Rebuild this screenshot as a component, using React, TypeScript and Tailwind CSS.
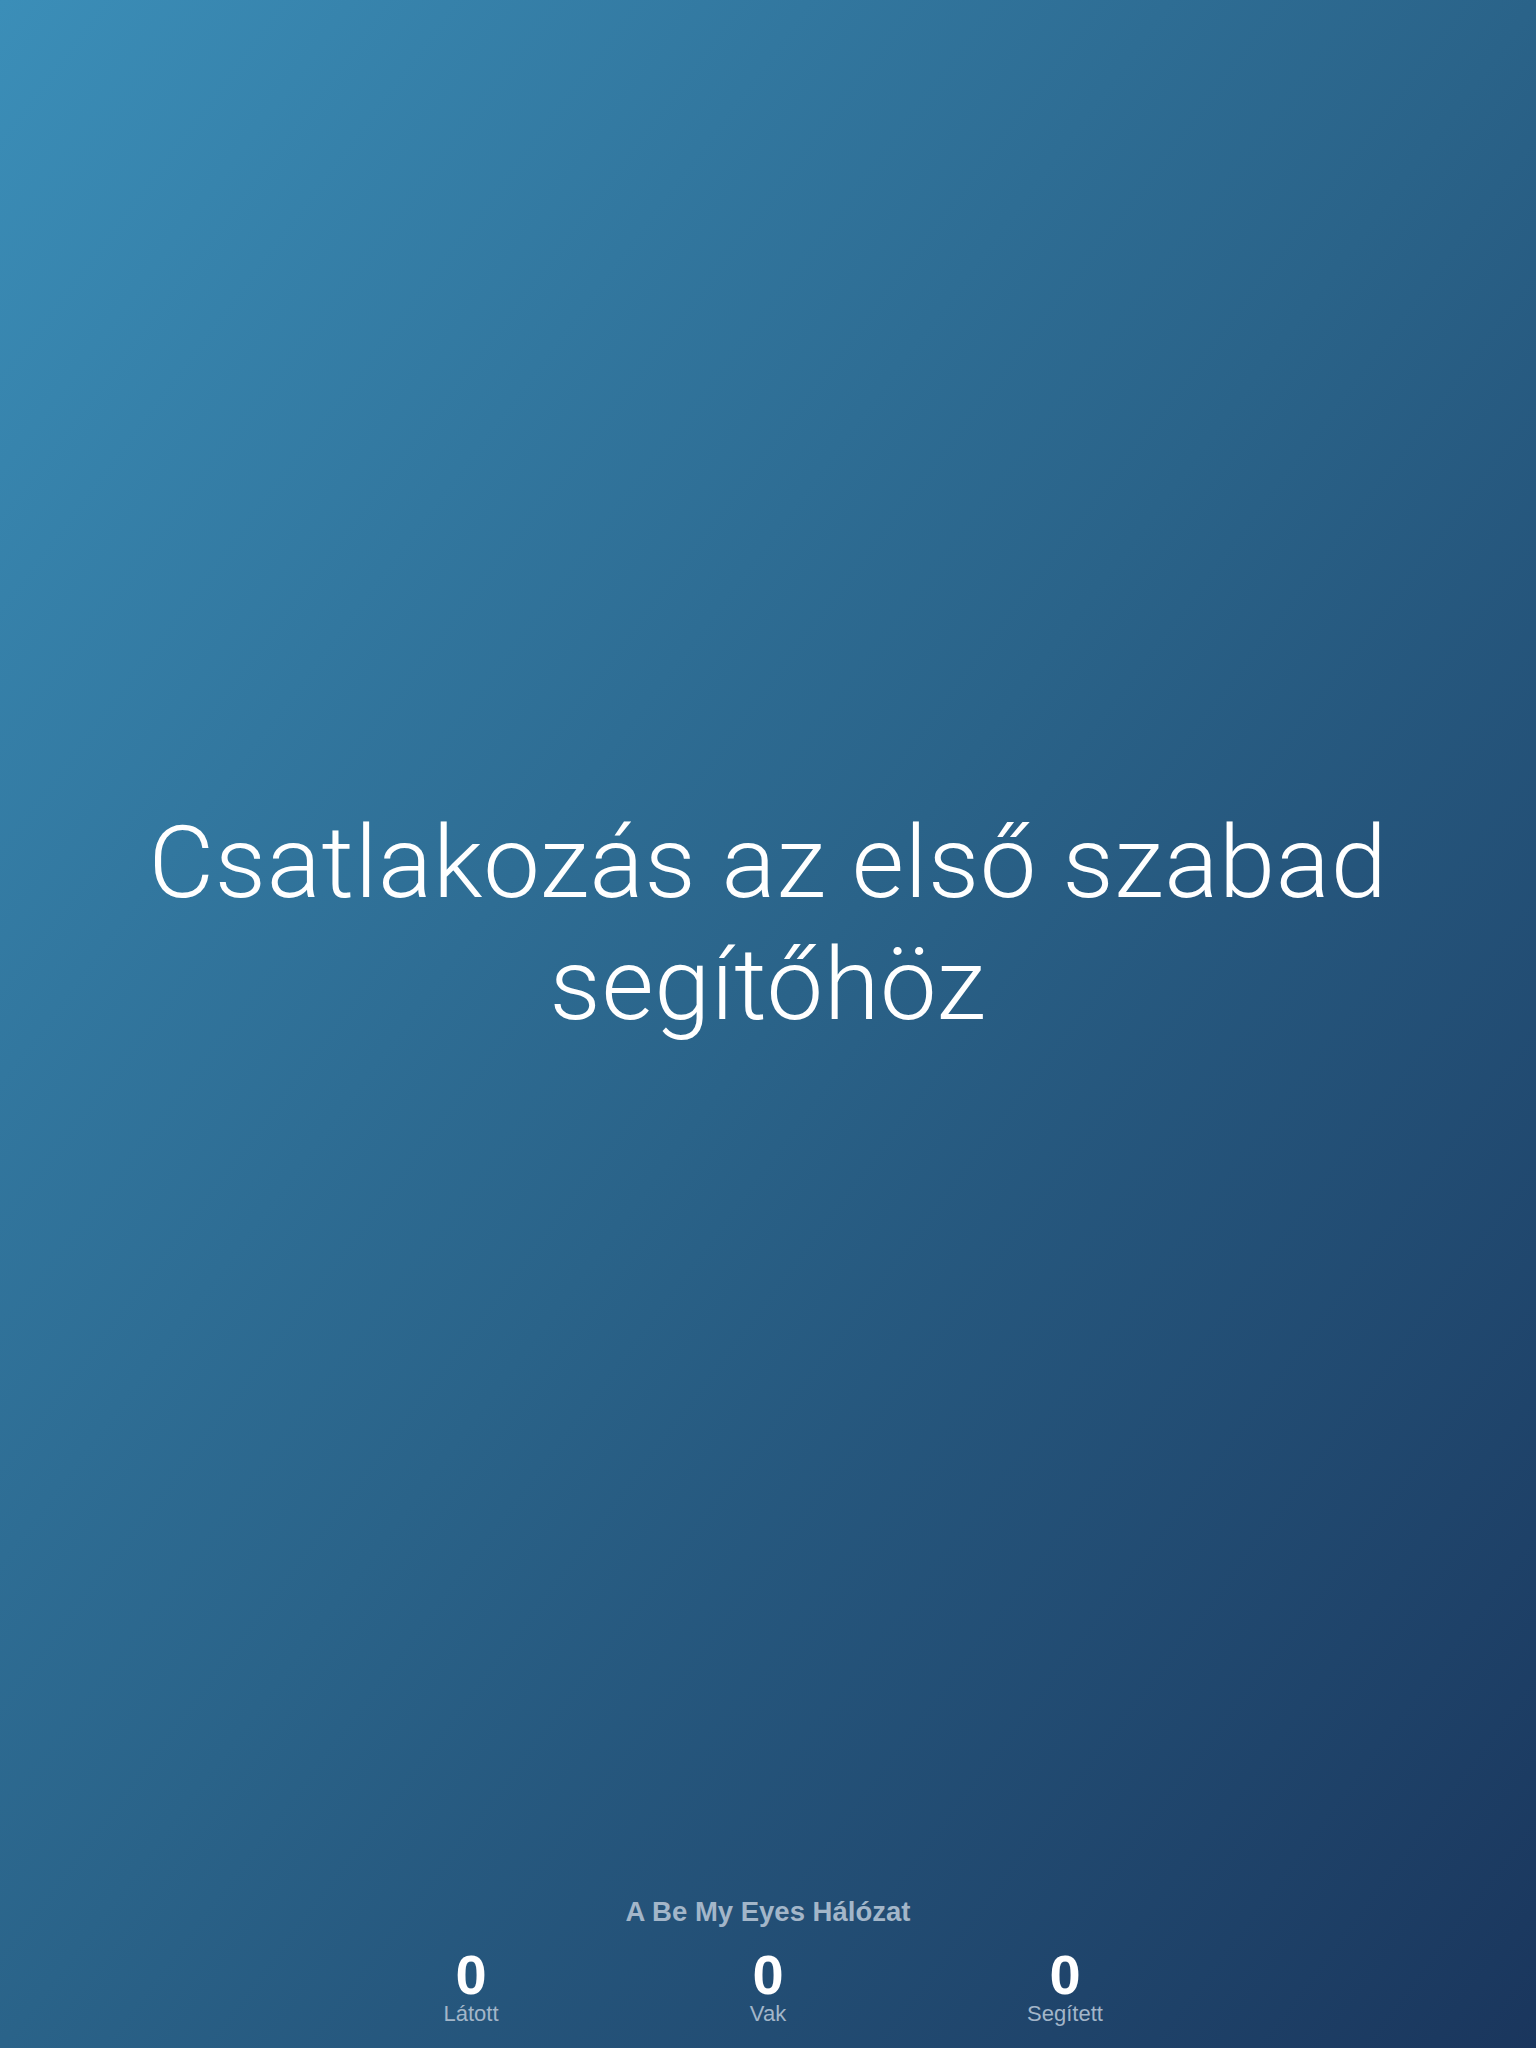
import React from "react";

const stats = [
  { value: 0, label: "Látott" },
  { value: 0, label: "Vak" },
  { value: 0, label: "Segített" },
];

export default function App() {
  return (
    <div className="flex h-[2048px] w-full flex-col bg-gradient-to-br from-[#3b8eb8] via-[#2a6389] to-[#1a365d] text-white">
      {/* Headline */}
      <div className="flex flex-1 items-center justify-center px-24 pb-[48px]">
        <h1 className="max-w-[1300px] text-center font-['Roboto','Liberation_Sans',sans-serif] text-[101px] font-light leading-[122px] tracking-[0.7px]">
          Csatlakozás az első szabad segítőhöz
        </h1>
      </div>

      {/* Network stats */}
      <div className="flex flex-col items-center pb-[22px] font-['Liberation_Sans',Arial,sans-serif]">
        <p className="text-[27.5px] font-bold leading-[32px] text-[#a3b6c9]">A Be My Eyes Hálózat</p>
        <div className="mt-[21px] grid w-[891px] grid-cols-3">
          {stats.map((s) => (
            <div key={s.label} className="flex flex-col items-center">
              <span className="text-[56px] font-bold leading-[52px]">{s.value}</span>
              <span className="mt-[1px] text-[22px] leading-[24px] text-[#a3b6c9]">{s.label}</span>
            </div>
          ))}
        </div>
      </div>
    </div>
  );
}
